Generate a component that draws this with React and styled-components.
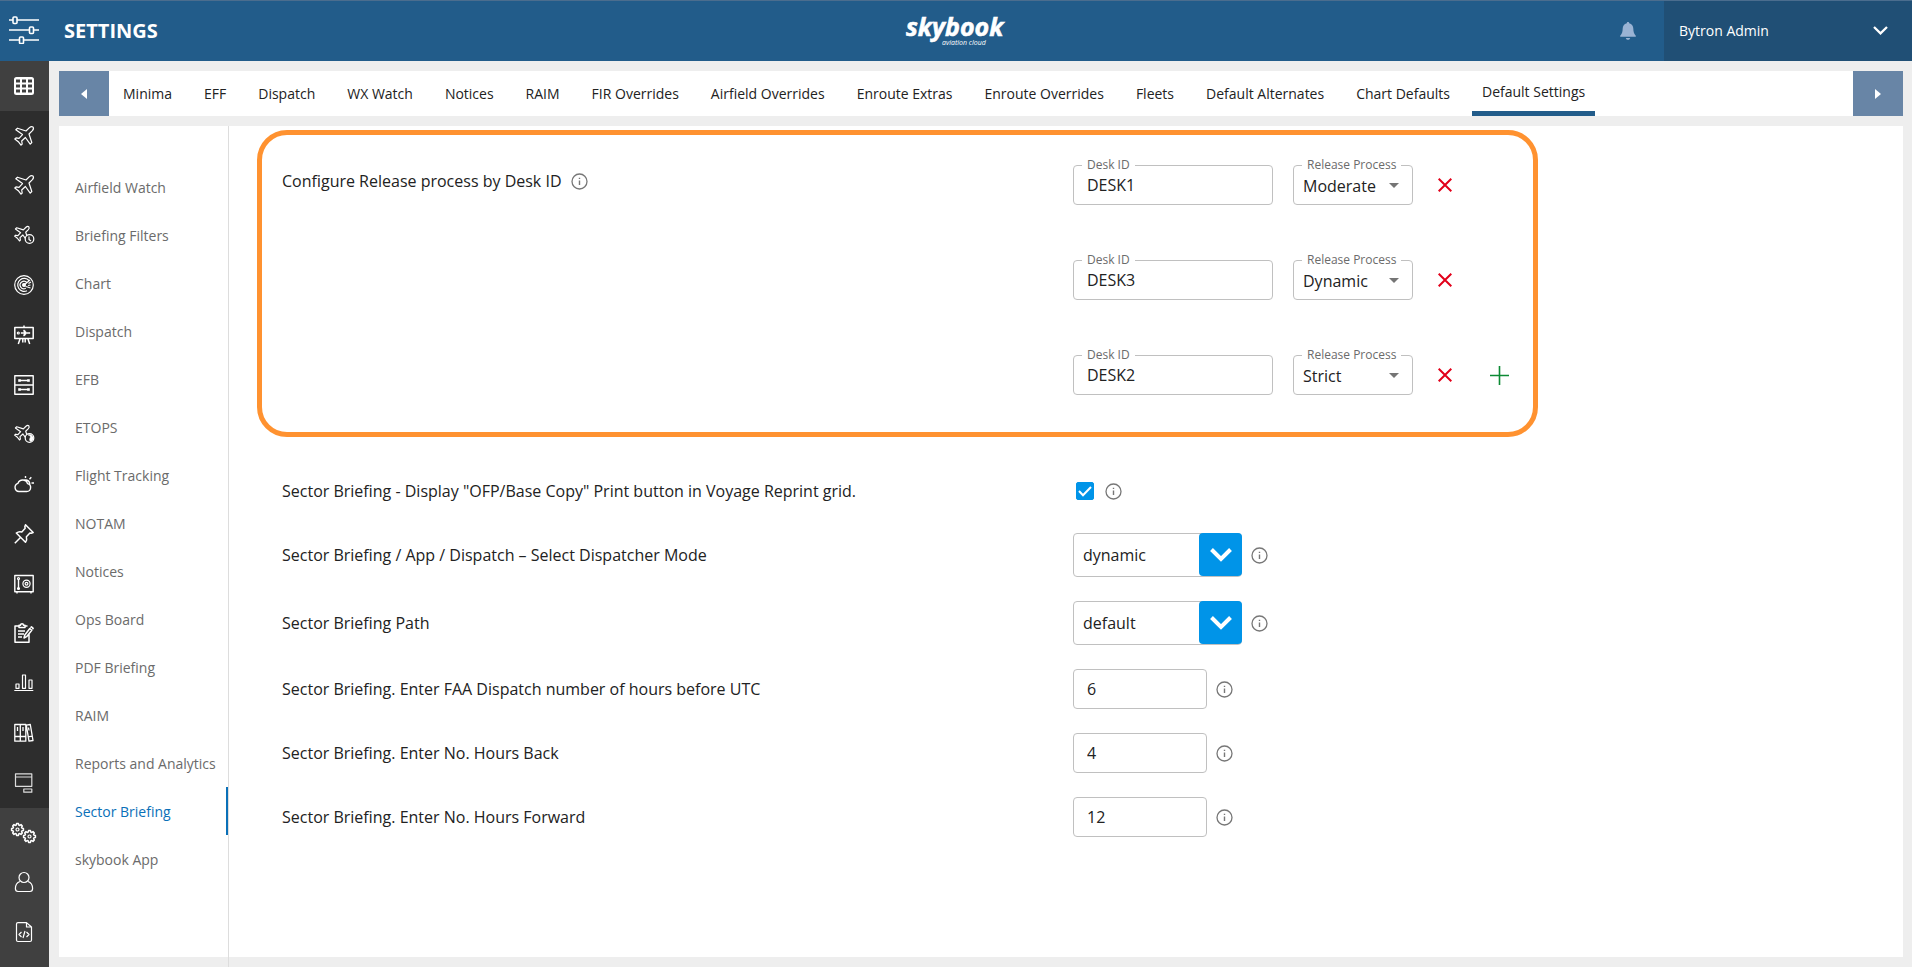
import React, { useState } from 'react'
import styled, { createGlobalStyle } from 'styled-components'

const TABS = [
  'Minima', 'EFF', 'Dispatch', 'WX Watch', 'Notices', 'RAIM', 'FIR Overrides',
  'Airfield Overrides', 'Enroute Extras', 'Enroute Overrides', 'Fleets',
  'Default Alternates', 'Chart Defaults', 'Default Settings',
]

const SECTIONS = [
  'Airfield Watch', 'Briefing Filters', 'Chart', 'Dispatch', 'EFB', 'ETOPS',
  'Flight Tracking', 'NOTAM', 'Notices', 'Ops Board', 'PDF Briefing', 'RAIM',
  'Reports and Analytics', 'Sector Briefing', 'skybook App',
]

const PLANE = 'M19 1c-1.2-.9-2.6-.3-3.6.6L12 5 3.5 2.2 1.8 3.8 8.5 8.6 5 12.3 2 11.8.8 13l3.5 2.7L7 19.2 8.2 18l-.5-3 3.7-3.5 4.8 6.7 1.6-1.7L15 8l3.4-3.4c.9-1 1.5-2.4.6-3.6z'

// outline of a cog with the given number of teeth
const cog = (cx, cy, outer, inner, teeth) => {
  const pts = []
  const step = (Math.PI * 2) / teeth
  for (let i = 0; i < teeth; i++) {
    [[-0.32, inner], [-0.2, outer], [0.2, outer], [0.32, inner]].forEach(([k, r]) => {
      const a = (i + k) * step
      pts.push(`${(cx + r * Math.cos(a)).toFixed(2)} ${(cy + r * Math.sin(a)).toFixed(2)}`)
    })
  }
  return `M${pts.join('L')}z`
}

const NAV = [
  { name: 'Grid', lit: true, icon: <path fill="#fff" stroke="none" fillRule="evenodd" d="M2.5 1h15A2.5 2.5 0 0 1 20 3.500v13a2.500 2.500 0 0 1-2.500 2.500h-15A2.500 2.500 0 0 1 0 16.500v-13A2.500 2.500 0 0 1 2.500 1zM2 3.500v3h4v-3zM8 3.500v3h4v-3zM14 3.500v3h4v-3zM2 8.500v3h4v-3zM8 8.500v3h4v-3zM14 8.500v3h4v-3zM2 13.500v3h4v-3zM8 13.500v3h4v-3zM14 13.500v3h4v-3z" /> },
  { name: 'Flights', icon: <path d={PLANE} /> },
  { name: 'Voyages', icon: <path d={PLANE} /> },
  {
    name: 'Schedule',
    icon: <>
      <path d={PLANE} transform="translate(0 1) scale(.78)" strokeWidth="1.500" />
      <circle cx="15.500" cy="14" r="4.300" fill="#2d2d2d" />
      <path d="M15 11.500v3l2 1.500" />
    </>,
  },
  {
    name: 'Radar',
    icon: <>
      <circle cx="10" cy="10" r="9.300" />
      <path d="M15 5.500A6.500 6.500 0 1 0 13 15.800M12.800 7.500a3.800 3.800 0 1 0-1 5.800M10 10l6-5M14.500 8.500l2.500-1.500M11.500 11.500l2 .5 3 1M14 10.500l2.500-.5" />
      <circle cx="10" cy="10" r="1.400" fill="#fff" />
    </>,
  },
  {
    name: 'Ops board',
    icon: <>
      <path strokeWidth="1.500" d="M.8 2.500h18.400v11H.8zM10 .5v2M6 14l-1.700 5M8.800 14v3.500M11.200 14v3.500M14 14l1.700 5" />
      <circle cx="4.300" cy="8" r="1" />
      <path fill="#fff" strokeWidth=".5" d="M7 7.500h3L9.500 5h1l2 2.500h3.500v1h-3.500l-2 2.500h-1l.5-2.500H7z" />
    </>,
  },
  {
    name: 'Storage',
    icon: <>
      <path strokeWidth="1.400" d="M.8.8h18.400v18.400H.8zM1 10h18M6 5.500h8M6 14.500h8" />
      <path fill="#fff" strokeWidth=".6" d="M4.500 4.500h2v2h-2zM13.500 4.500h2v2h-2zM4.500 13.500h2v2h-2zM13.500 13.500h2v2h-2z" />
    </>,
  },
  {
    name: 'Night flights',
    icon: <>
      <path d={PLANE} transform="translate(0 1) scale(.78)" strokeWidth="1.500" />
      <circle cx="15.500" cy="14" r="4.300" fill="#2d2d2d" />
      <path fill="#fff" d="M14 11c2 .5 3 1.500 2 3s-.5 2.500.5 3.500c3-.5 3.500-4 1.500-6-1-1-2.500-1.300-4-.5z" strokeWidth=".4" />
    </>,
  },
  { name: 'Weather', icon: <path strokeWidth="1.400" d="M5 17.500h7.500a4 4 0 0 0 1-7.900A5 5 0 0 0 4 9.300a4.200 4.200 0 0 0 1 8.200zM10 6.500c3-1.500 6.500 1 5.500 4.800M11.500 4V2M15.500 5.200l1.800-2M17.500 9H20" /> },
  { name: 'Pins', icon: <path d="M11.500.8l7.700 7.700-2 .7-1.300-.2-3.500 3.700c.6 2 .4 3.700-.9 5.500L2.300 9c1.700-1.300 3.600-1.700 5.500-1l3.400-3.700-.4-1.500zM6.500 13.500L.8 19.200" strokeWidth="1.500" /> },
  {
    name: 'Vault',
    icon: <>
      <path strokeWidth="1.400" d="M.8 1.500h18.400v16.300H.8zM3 18v1.500M17 18v1.500M4.500 5v10" />
      <circle cx="4.500" cy="4.500" r="1" /><circle cx="4.500" cy="14.500" r="1" />
      <circle cx="12.500" cy="9.700" r="3.600" /><circle cx="12.500" cy="9.700" r="1.400" />
    </>,
  },
  { name: 'Reports', icon: <path strokeWidth="1.500" d="M5 3H1v16.200h14V11M11 3h2.500M5 4.500V2.200h1.500C6.500.3 9.500.3 9.500 2.200H11v2.300zM4 8h7M4 11h6M4 14h4M10 15l.8-3 5-6.500 2 1.700-5.200 6.500zM16.500 4.700l1-1 1.700 1.500-.8 1" /> },
  { name: 'Analytics', icon: <path d="M.3 17.500h19M2 11h3v4.300H2zM8.500 2h3v13.300h-3zM15 7h3v8.300h-3z" /> },
  { name: 'Library', icon: <path strokeWidth="1.300" d="M.8 1.500h5.500v16.700H.8zM6.300 1.500h5.500v16.700H6.300zM1 13.500h10.800M3.500 4v4M9 4v4M12.300 2.200l4-.7 2.700 16-4 .7zM14 13.800l4.200-.7M14.500 4.500l.5 3" /> },
  { name: 'Displays', icon: <path stroke="#ddd" d="M1.500.8h16.300v12.500H1.500zM1.500 4h16.300M9.800 16h8v3.200h-8z" /> },
]

const ADMIN_NAV = [
  {
    name: 'Settings',
    icon: <>
      <path strokeWidth="1.500" d={cog(3.500, 6.500, 6, 4.700, 8)} /><circle cx="3.500" cy="6.500" r="1.500" />
      <path strokeWidth="1.500" d={cog(15.500, 13.500, 6, 4.700, 8)} /><circle cx="15.500" cy="13.500" r="1.500" />
    </>,
  },
  { name: 'Users', icon: <><circle cx="10" cy="5.500" r="5" /><path d="M6 9.500c-3 1-4.600 3.300-4.600 7 0 2 .6 3 2.600 3h12c2 0 2.600-1 2.600-3 0-3.700-1.600-6-4.600-7" /></> },
  { name: 'Developer', icon: <path d="M4 .6h8.500L17.500 5v13c0 1-.5 1.500-1.500 1.500H4c-1 0-1.500-.5-1.500-1.500V2C2.500 1 3 .6 4 .6zM12.500.8V5h4.800M7.500 10L5 12.500 7.500 15M12.500 10l2.500 2.500-2.500 2.500M11 9l-2 7" /> },
]

const NavIcon = ({ children }) => (
  <svg width="20" height="20" viewBox="0 0 20 20" fill="none" stroke="#fff" strokeWidth="1.200" strokeLinejoin="round" overflow="visible" aria-hidden="true">{children}</svg>
)

const Info = () => (
  <InfoButton type="button" aria-label="More information">
    <svg width="17" height="17" viewBox="0 0 17 17" fill="none" stroke="#777" strokeWidth="1.300">
      <circle cx="8.500" cy="8.500" r="7.500" />
      <path d="M8.500 7.500v4.500M8.500 4.700v1.400" strokeWidth="1.400" />
    </svg>
  </InfoButton>
)

const DeskRow = ({ id, desk, process, onChange, onRemove, last, onAdd }) => (
  <DeskLine>
    <Outlined $width={200}>
      <DeskInput id={`desk-${id}`} value={desk} onChange={(e) => onChange('desk', e.target.value)} />
      <FloatLabel htmlFor={`desk-${id}`}>Desk ID</FloatLabel>
    </Outlined>
    <Outlined $width={120}>
      <ProcessSelect id={`process-${id}`} value={process} onChange={(e) => onChange('process', e.target.value)}>
        <option>Moderate</option>
        <option>Dynamic</option>
        <option>Strict</option>
      </ProcessSelect>
      <FloatLabel htmlFor={`process-${id}`}>Release Process</FloatLabel>
      <Caret width="10" height="5" viewBox="0 0 10 5"><path d="M0 0h10L5 5z" fill="#757575" /></Caret>
    </Outlined>
    <IconButton type="button" aria-label={`Remove ${desk}`} onClick={onRemove}>
      <svg width="14" height="14" viewBox="0 0 14 14" stroke="#e2001a" strokeWidth="2"><path d="M.7.7l12.600 12.600M13.300.7L.7 13.300" /></svg>
    </IconButton>
    {last && (
      <AddButton type="button" aria-label="Add desk" onClick={onAdd}>
        <svg width="19" height="19" viewBox="0 0 19 19" stroke="#0c8a34" strokeWidth="1.600"><path d="M9.500 0v19M0 9.500h19" /></svg>
      </AddButton>
    )}
  </DeskLine>
)

const Dropdown = ({ id, options }) => (
  <DropdownBox>
    <DropdownSelect id={id}>
      {options.map((o) => <option key={o}>{o}</option>)}
    </DropdownSelect>
    <DropdownArrow>
      <svg width="22" height="14" viewBox="0 0 22 14" fill="none" stroke="#fff" strokeWidth="4"><path d="M1.500 1.500L11 11l9.500-9.500" /></svg>
    </DropdownArrow>
  </DropdownBox>
)

export default function App() {
  const [tab, setTab] = useState('Default Settings')
  const [section, setSection] = useState('Sector Briefing')
  const [printButton, setPrintButton] = useState(true)
  const [desks, setDesks] = useState([
    { id: 1, desk: 'DESK1', process: 'Moderate' },
    { id: 2, desk: 'DESK3', process: 'Dynamic' },
    { id: 3, desk: 'DESK2', process: 'Strict' },
  ])

  const changeDesk = (id, key, value) => setDesks(desks.map((d) => (d.id === id ? { ...d, [key]: value } : d)))
  const addDesk = () => setDesks([...desks, { id: Date.now(), desk: '', process: 'Moderate' }])

  return (
    <Page>
      <GlobalStyle />
      <Header>
        <HeaderLeft>
          <MenuButton type="button" aria-label="Menu">
            <svg width="30" height="28" viewBox="0 0 30 28" fill="#225c8a" stroke="#fff" strokeWidth="1.600">
              <path d="M0 4h30M0 14h30M0 24h30" />
              <rect x="4" y="1" width="4" height="6.500" rx="1" />
              <rect x="20.500" y="11" width="4" height="6.500" rx="1" />
              <rect x="10.500" y="21" width="4" height="6.500" rx="1" />
            </svg>
          </MenuButton>
          <Title>SETTINGS</Title>
        </HeaderLeft>
        <Logo viewBox="0 0 100 34" role="img" aria-label="skybook aviation cloud">
          <text x="0" y="22" fontSize="25" fontWeight="700" stroke="#fff" strokeWidth=".6">skybook</text>
          <text x="36" y="31" fontSize="7">aviation cloud</text>
        </Logo>
        <HeaderRight>
          <BellButton type="button" aria-label="Notifications">
            <svg width="16" height="18" viewBox="0 0 16 18" fill="#9ab3d4">
              <path d="M8 0c.8 0 1.200.5 1.200 1.300C12 2 13.200 4 13.300 6.500c.1 3.500.7 5.500 2.500 7.200v1H.2v-1C2 12 2.600 10 2.700 6.500 2.800 4 4 2 6.800 1.300 6.800.5 7.200 0 8 0zM5.800 16h4.400c-.4 1.300-1.200 1.800-2.200 1.800S6.200 17.300 5.800 16z" />
            </svg>
          </BellButton>
          <UserButton type="button">
            Bytron Admin
            <svg width="15" height="9" viewBox="0 0 15 9" fill="none" stroke="#fff" strokeWidth="2.300"><path d="M1 1l6.500 6.300L14 1" /></svg>
          </UserButton>
        </HeaderRight>
      </Header>

      <Body>
        <Rail aria-label="Modules">
          {NAV.map((n) => <RailItem key={n.name} type="button" aria-label={n.name} $lit={n.lit}><NavIcon>{n.icon}</NavIcon></RailItem>)}
          {ADMIN_NAV.map((n) => <RailItem key={n.name} type="button" aria-label={n.name} $lit><NavIcon>{n.icon}</NavIcon></RailItem>)}
        </Rail>

        <Content>
          <TabBar>
            <Scroller type="button" aria-label="Previous tabs">
              <svg width="6" height="10" viewBox="0 0 6 10"><path d="M6 0v10L0 5z" fill="#fff" /></svg>
            </Scroller>
            <TabList role="tablist">
              {TABS.map((t) => (
                <Tab key={t} type="button" role="tab" aria-selected={t === tab} $active={t === tab} onClick={() => setTab(t)}>{t}</Tab>
              ))}
            </TabList>
            <Scroller type="button" aria-label="Next tabs">
              <svg width="6" height="10" viewBox="0 0 6 10"><path d="M0 0v10l6-5z" fill="#fff" /></svg>
            </Scroller>
          </TabBar>

          <Panel>
            <SectionMenu>
              {SECTIONS.map((s) => (
                <SectionLink key={s} href="#" $active={s === section} onClick={() => setSection(s)}>{s}</SectionLink>
              ))}
            </SectionMenu>

            <Main>
              <ReleaseBox>
                <ReleaseLabel>
                  Configure Release process by Desk ID
                  <Info />
                </ReleaseLabel>
                <DeskList>
                  {desks.map((d, i) => (
                    <DeskRow
                      key={d.id}
                      {...d}
                      last={i === desks.length - 1}
                      onChange={(key, value) => changeDesk(d.id, key, value)}
                      onRemove={() => setDesks(desks.filter((x) => x.id !== d.id))}
                      onAdd={addDesk}
                    />
                  ))}
                </DeskList>
              </ReleaseBox>

              <SettingList>
                <Setting>
                  <label htmlFor="print-button">Sector Briefing - Display "OFP/Base Copy" Print button in Voyage Reprint grid.</label>
                  <CheckControl>
                    <Checkbox id="print-button" type="checkbox" checked={printButton} onChange={() => setPrintButton(!printButton)} />
                    <Tick width="14" height="11" viewBox="0 0 14 11" fill="none" stroke="#fff" strokeWidth="2"><path d="M1 5l4 4.300L13 1" /></Tick>
                    <Info />
                  </CheckControl>
                </Setting>
                <Setting>
                  <label htmlFor="mode">Sector Briefing / App / Dispatch – Select Dispatcher Mode</label>
                  <Control><Dropdown id="mode" options={['dynamic', 'moderate', 'strict']} /><Info /></Control>
                </Setting>
                <Setting>
                  <label htmlFor="path">Sector Briefing Path</label>
                  <Control><Dropdown id="path" options={['default']} /><Info /></Control>
                </Setting>
                <Setting>
                  <label htmlFor="faa-hours">Sector Briefing. Enter FAA Dispatch number of hours before UTC</label>
                  <Control><HoursInput id="faa-hours" inputMode="numeric" defaultValue="6" /><Info /></Control>
                </Setting>
                <Setting>
                  <label htmlFor="hours-back">Sector Briefing. Enter No. Hours Back</label>
                  <Control><HoursInput id="hours-back" inputMode="numeric" defaultValue="4" /><Info /></Control>
                </Setting>
                <Setting>
                  <label htmlFor="hours-forward">Sector Briefing. Enter No. Hours Forward</label>
                  <Control><HoursInput id="hours-forward" inputMode="numeric" defaultValue="12" /><Info /></Control>
                </Setting>
              </SettingList>
            </Main>
          </Panel>
        </Content>
      </Body>
    </Page>
  )
}

const GlobalStyle = createGlobalStyle`
  * {
    box-sizing: border-box;
  }
  body {
    margin: 0;
    font-family: 'Open Sans', 'Noto Sans', sans-serif;
    font-size: 16px;
    color: #222;
    background: #eee;
  }
  button, input, select {
    font: inherit;
    color: inherit;
  }
  button {
    border: none;
    padding: 0;
    background: none;
    cursor: pointer;
  }
  svg {
    display: block;
  }
`

const Page = styled.div`
  display: flex;
  flex-direction: column;
  min-height: 100vh;
`

const Header = styled.header`
  display: grid;
  grid-template-columns: 1fr auto 1fr;
  height: 61px;
  border-top: 1px solid #4b6d8e;
  background: #225c8a;
  color: #fff;
`
const HeaderLeft = styled.div`
  display: flex;
  align-items: center;
  padding-bottom: 2px;
`
const MenuButton = styled.button`
  padding: 0 25px 0 9px;
`
const Title = styled.h1`
  margin: 0;
  font-size: 20px;
  font-weight: 700;
`
const Logo = styled.svg`
  align-self: center;
  width: 100px;
  height: 34px;
  overflow: visible;

  text {
    fill: #fff;
    font-family: 'Open Sans', 'Noto Sans', sans-serif;
    font-style: italic;
  }
`
const HeaderRight = styled.div`
  display: flex;
  justify-content: flex-end;
`
const BellButton = styled.button`
  padding: 0 28px;
`
const UserButton = styled.button`
  display: flex;
  align-items: center;
  justify-content: space-between;
  width: 248px;
  padding: 0 24px 2px 15px;
  background: #204f75;
  font-size: 14px;
  font-weight: 500;
`

const Body = styled.div`
  display: flex;
  flex: 1;
`
const Rail = styled.nav`
  display: flex;
  flex-direction: column;
  width: 49px;
  padding-bottom: 10px;
  background: #404040;
`
const RailItem = styled.button`
  display: flex;
  flex: 1;
  align-items: center;
  justify-content: center;
  padding-right: 1px;
  background: ${(p) => (p.$lit ? '#404040' : '#2d2d2d')};
`

const Content = styled.div`
  display: flex;
  flex: 1;
  flex-direction: column;
  gap: 10px;
  min-width: 0;
  padding: 10px 9px 0 10px;
`
const TabBar = styled.div`
  display: flex;
  height: 45px;
  background: #fff;
`
const Scroller = styled.button`
  display: flex;
  flex: 0 0 50px;
  align-items: center;
  justify-content: center;
  background: #6885a6;
`
const TabList = styled.div`
  display: flex;
  flex: 1;
  gap: 12px;
  padding: 0 4px;
  overflow: hidden;
`
const Tab = styled.button`
  flex-shrink: 0;
  padding: 0 10px;
  border-bottom: ${(p) => (p.$active ? '5px solid #225c8a' : 'none')};
  font-size: 14px;
`

const Panel = styled.div`
  display: flex;
  flex: 1;
  background: linear-gradient(#fff, #fff) no-repeat 0 0 / 100% calc(100% - 10px);
`
const SectionMenu = styled.nav`
  display: flex;
  flex: 0 0 170px;
  flex-direction: column;
  padding-top: 37px;
  border-right: 1px solid #ddd;
`
const SectionLink = styled.a`
  display: flex;
  align-items: center;
  height: 48px;
  padding-left: 16px;
  border-right: 2px solid ${(p) => (p.$active ? '#0a70b8' : 'transparent')};
  color: ${(p) => (p.$active ? '#0a70b8' : '#6b6b6b')};
  font-size: 14px;
  text-decoration: none;
  white-space: nowrap;
`

const Main = styled.main`
  flex: 1;
  min-width: 0;
  max-width: 1309px;
  padding: 4px 0 0 28px;
`
const ReleaseBox = styled.section`
  display: grid;
  grid-template-columns: 1fr 440px;
  padding: 30px 20px 37px;
  border: 5px solid #ff9230;
  border-radius: 30px;
`
const ReleaseLabel = styled.div`
  display: flex;
  gap: 10px;
  align-items: center;
  height: 32px;
`
const DeskList = styled.div`
  display: flex;
  flex-direction: column;
  gap: 55px;
`
const DeskLine = styled.div`
  display: flex;
  gap: 20px;
  align-items: center;
`
const Outlined = styled.div`
  position: relative;
  flex-shrink: 0;
  width: ${(p) => p.$width}px;
  height: 40px;
`
const FloatLabel = styled.label`
  position: absolute;
  top: -8px;
  left: 9px;
  padding: 0 5px;
  background: #fff;
  color: #6b6b6b;
  font-size: 12px;
  line-height: 16px;
`
const DeskInput = styled.input`
  width: 100%;
  height: 40px;
  padding: 0 13px;
  border: 1px solid #c0c0c0;
  border-radius: 4px;
  background: #fff;
`
const ProcessSelect = styled.select`
  width: 100%;
  height: 40px;
  padding: 2px 9px 0;
  border: 1px solid #c0c0c0;
  border-radius: 4px;
  background: #fff;
  appearance: none;
`
const Caret = styled.svg`
  position: absolute;
  top: 18px;
  right: 14px;
  pointer-events: none;
`
const IconButton = styled.button`
  padding: 5px;
`
const AddButton = styled(IconButton)`
  margin-left: 8px;
`

const SettingList = styled.div`
  display: flex;
  flex-direction: column;
  gap: 24px;
  padding: 36px 25px;
`
const Setting = styled.div`
  display: grid;
  grid-template-columns: 1fr 440px;
  align-items: center;
`
const Control = styled.div`
  display: flex;
  gap: 9px;
  align-items: center;
  min-height: 36px;
`
const CheckControl = styled(Control)`
  position: relative;
  gap: 11px;
  padding-left: 3px;
`
const Checkbox = styled.input`
  width: 18px;
  height: 18px;
  margin: 0;
  border: 1px solid #0094e8;
  border-radius: 2px;
  background: #fff;
  appearance: none;

  &:checked {
    background: #0094e8;
  }
`
const Tick = styled.svg`
  position: absolute;
  left: 5px;
  pointer-events: none;
`
const InfoButton = styled.button`
  flex-shrink: 0;
`
const DropdownBox = styled.div`
  position: relative;
  width: 169px;
`
const DropdownSelect = styled.select`
  display: block;
  width: 100%;
  height: 44px;
  padding: 0 52px 0 9px;
  border: 1px solid #c0c0c0;
  border-radius: 4px;
  background: #fff;
  appearance: none;
`
const DropdownArrow = styled.span`
  position: absolute;
  top: 0;
  right: 0;
  display: flex;
  align-items: center;
  justify-content: center;
  width: 43px;
  height: 43px;
  border-radius: 4px;
  background: #0094e8;
  pointer-events: none;
`
const HoursInput = styled.input`
  width: 134px;
  height: 40px;
  padding: 0 13px;
  border: 1px solid #c0c0c0;
  border-radius: 4px;
  background: #fff;
`
